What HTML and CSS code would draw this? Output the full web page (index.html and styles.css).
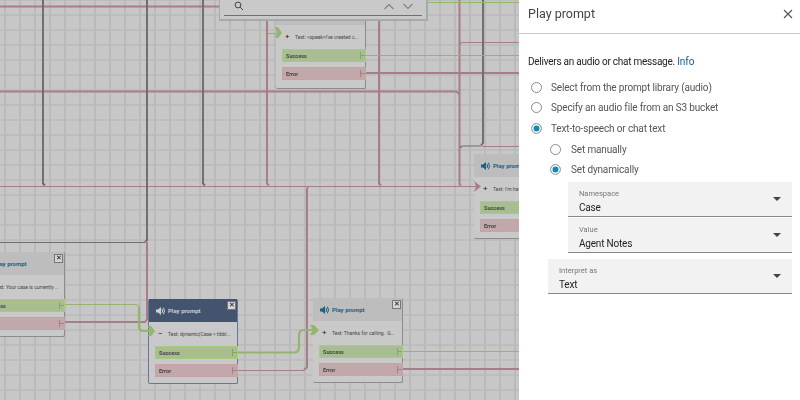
FILE: index.html
```html
<!DOCTYPE html>
<html lang="en">
<head>
<meta charset="utf-8">
<title>Play prompt</title>
<link rel="stylesheet" href="styles.css">
</head>
<body>
<div class="app">
  <main class="canvas">
    <section class="node node-one">
      <header class="node-head">
        <span class="node-icon"></span>
        <span class="node-name">Play prompt</span>
        <span class="node-close">&#10005;</span>
      </header>
      <div class="node-text"><span class="node-toggle"></span>Text: Your case is currently ...</div>
      <div class="port port-ok">Success</div>
      <div class="port port-err">Error</div>
    </section>

    <section class="node node-two">
      <header class="node-head">
        <svg class="node-icon" width="10" height="10" viewBox="0 0 10 10"><path class="speaker" d="M0 3.500H2L5 1V9L2 6.500H0Z"/><path class="speaker-wave" d="M6 3Q7.300 5 6 7M7.400 1.700Q9.600 5 7.400 8.300"/></svg>
        <span class="node-name">Play prompt</span>
        <span class="node-close">&#10005;</span>
      </header>
      <div class="node-text"><span class="node-toggle">&minus;</span>Text: dynamic(Case &gt; tibbl...</div>
      <div class="port port-ok">Success</div>
      <div class="port port-err">Error</div>
    </section>

    <section class="node node-three">
      <header class="node-head">
        <svg class="node-icon" width="10" height="10" viewBox="0 0 10 10"><path class="speaker" d="M0 3.500H2L5 1V9L2 6.500H0Z"/><path class="speaker-wave" d="M6 3Q7.300 5 6 7M7.400 1.700Q9.600 5 7.400 8.300"/></svg>
        <span class="node-name">Play prompt</span>
        <span class="node-close">&#10005;</span>
      </header>
      <div class="node-text"><span class="node-toggle">+</span>Text: Thanks for calling.&nbsp; G...</div>
      <div class="port port-ok">Success</div>
      <div class="port port-err">Error</div>
    </section>

    <section class="node node-top">
      <header class="node-head"></header>
      <div class="node-text"><span class="node-toggle">+</span>Text: &lt;speak&gt;I've created c...</div>
      <div class="port port-ok">Success</div>
      <div class="port port-err">Error</div>
    </section>

    <section class="node node-four">
      <header class="node-head">
        <svg class="node-icon" width="10" height="10" viewBox="0 0 10 10"><path class="speaker" d="M0 3.500H2L5 1V9L2 6.500H0Z"/><path class="speaker-wave" d="M6 3Q7.300 5 6 7M7.400 1.700Q9.600 5 7.400 8.300"/></svg>
        <span class="node-name">Play prompt</span>
      </header>
      <div class="node-text"><span class="node-toggle">+</span>Text: I'm having trouble...</div>
      <div class="port port-ok">Success</div>
      <div class="port port-err">Error</div>
    </section>

    <svg class="wires" width="519" height="400" viewBox="0 0 519 400" fill="none">
      <g class="rose thick">
        <path d="M0 6.500H220"/>
        <path d="M0 91.500H456.500L459.500 94"/>
        <path d="M267 20V183.500L269 185.500"/>
        <path d="M379 20V183.500L381 185.500"/>
        <path d="M459.500 0V184L461 186"/>
        <path d="M147 242V319.500L145 322H65"/>
        <path d="M307 188V367L304 370"/>
        <path d="M366 73H519"/>
        <path d="M403 369H519"/>
      </g>
      <g class="rose thin">
        <path d="M0 186.500H476"/>
        <path d="M238 370.500H304"/>
        <path d="M459.500 45L461.500 42.500H519"/>
        <path d="M482 146.500H519"/>
        <path d="M307 188L309 186.500"/>
      </g>
      <g class="gray thick">
        <path d="M43 0V183.500L45 185.500"/>
        <path d="M203 0V183.500L205 185.500"/>
        <path d="M147 0V240L145 242"/>
        <path d="M483 0V143L481 145.500"/>
      </g>
      <g class="gray thin">
        <path d="M0 242.500H145"/>
        <path d="M460 148L462 146H481"/>
      </g>
      <g class="green thin">
        <path d="M425 2.500H519"/>
        <path d="M365 55.500H519"/>
        <path d="M403 351.500H519"/>
        <path d="M65 304.500H135Q139 304.500 139 308"/>
        <path d="M268 33.500H277"/>
      </g>
      <g class="green thick">
        <path d="M139 308V326Q139 331 144 331H150"/>
        <path d="M238 352.500H294Q299 352.500 299 347V335Q299 330 304 330H313"/>
      </g>
      <path class="green-fill" d="M148 326L151 326L155 331L151 336L148 336L150 331Z"/>
      <path class="green-fill" d="M310 325L314 325L319 330L314 335L310 335L313 330Z"/>
      <path class="green-fill" d="M275 27L278 27L282 33L278 38L275 38L277 33Z"/>
      <path class="rose-fill" d="M474 181L481 186.500L474 192L476 186.500Z"/>
    </svg>

    <div class="finder">
      <div class="finder-row">
        <svg class="finder-search" width="10" height="10" viewBox="0 0 10 10" fill="none"><circle cx="4" cy="4" r="2.900"/><path d="M6.200 6.200L9 9"/></svg>
        <span class="finder-input"></span>
        <svg class="finder-arrow" width="12" height="7" viewBox="0 0 12 7" fill="none"><path d="M1.500 6L6 1.500L10.500 6"/></svg>
        <svg class="finder-arrow" width="12" height="7" viewBox="0 0 12 7" fill="none"><path d="M1.500 1L6 5.500L10.500 1"/></svg>
      </div>
    </div>
  </main>

  <aside class="panel">
    <header class="panel-head">
      <h1 class="panel-title">Play prompt</h1>
      <svg class="panel-close" width="10" height="10" viewBox="0 0 10 10" fill="none"><path d="M1 1L9 9M9 1L1 9"/></svg>
    </header>
    <div class="panel-body">
      <p class="panel-desc">Delivers an audio or chat message. <a class="panel-link" href="#">Info</a></p>
      <div class="choice"><span class="radio"></span>Select from the prompt library (audio)</div>
      <div class="choice"><span class="radio"></span>Specify an audio file from an S3 bucket</div>
      <div class="choice"><span class="radio radio-on"></span>Text-to-speech or chat text</div>
      <div class="choice choice-sub"><span class="radio"></span>Set manually</div>
      <div class="choice choice-sub"><span class="radio radio-on"></span>Set dynamically</div>
      <div class="select-group">
        <div class="select">
          <div class="select-text"><span class="select-label">Namespace</span><span class="select-value">Case</span></div>
          <span class="caret"></span>
        </div>
        <div class="select">
          <div class="select-text"><span class="select-label">Value</span><span class="select-value">Agent Notes</span></div>
          <span class="caret"></span>
        </div>
      </div>
      <div class="select select-wide">
        <div class="select-text"><span class="select-label">Interpret as</span><span class="select-value">Text</span></div>
        <span class="caret"></span>
      </div>
    </div>
  </aside>
</div>
</body>
</html>
```

FILE: styles.css
```css
* { box-sizing: border-box; }

html, body {
  margin: 0;
  height: 100%;
  overflow: hidden;
}

body {
  font-family: Roboto, "Liberation Sans", sans-serif;
  background: #fff;
}

.app {
  display: flex;
  width: 800px;
  height: 400px;
}

/* Flow canvas */
.canvas {
  position: relative;
  flex: 0 0 519px;
  height: 400px;
  overflow: hidden;
  background-color: #c7c7c7;
  background-image:
    linear-gradient(to right, #bababa 2px, transparent 2px),
    linear-gradient(to bottom, #bdbdbd 2px, transparent 2px);
  background-size: 15px 15px;
  background-position: 4px 0, 0 14px;
}

.wires {
  position: absolute;
  left: 0;
  top: 0;
}

.rose { stroke: #a87d87; }
.gray { stroke: #6f6f6f; }
.green { stroke: #93b56c; }
.thick { stroke-width: 2; }
.thin { stroke-width: 1.2; }
.green.thick { stroke-width: 2.2; }
.green-fill { fill: #93b56c; }
.rose-fill { fill: #a87d87; }

/* Flow nodes */
.node {
  position: absolute;
  width: 90px;
  height: 85px;
  display: flex;
  flex-direction: column;
  background: #c9c9c9;
  border-right: 1px solid #8b8b8b;
  border-bottom: 1px solid #8b8b8b;
  border-radius: 2px;
  filter: blur(0.35px);
}

.node-one { left: -25px; top: 252px; }
.node-two { left: 148px; top: 299px; border: 1px solid #66789a; border-top: 0; }
.node-three { left: 313px; top: 298px; }
.node-top { left: 276px; top: 2px; height: 87px; }
.node-four { left: 474px; top: 154px; }

.node-head {
  display: flex;
  align-items: center;
  flex: 0 0 23px;
  padding-left: 7px;
  gap: 2px;
  background: #bdbdbd;
  position: relative;
}

.node-two .node-head { background: #44546f; }

.node-icon { flex: none; width: 10px; }
.speaker { fill: #1f5f85; }
.speaker-wave { fill: none; stroke: #1f5f85; stroke-width: 1; }
.node-two .speaker { fill: #d0d0d0; }
.node-two .speaker-wave { stroke: #d0d0d0; }

.node-name {
  font-size: 6px;
  font-weight: 700;
  color: #1f5f85;
}

.node-two .node-name { color: #c9ccd2; }

.node-close {
  position: absolute;
  right: 1px;
  top: 2px;
  width: 9px;
  height: 9px;
  display: flex;
  align-items: center;
  justify-content: center;
  font-size: 7px;
  line-height: 1;
  color: #111;
  background: #d4d4d4;
  border: 1px solid #777;
}

.node-text {
  flex: 0 0 24px;
  display: flex;
  align-items: center;
  padding-left: 9px;
  font-size: 5px;
  color: #444;
  white-space: nowrap;
  overflow: hidden;
}

.node-toggle {
  flex: none;
  width: 10px;
  font-size: 8px;
  line-height: 1;
  color: #222;
}

.port {
  position: relative;
  flex: 0 0 13px;
  margin-left: 6px;
  margin-right: -1px;
  padding-left: 3px;
  display: flex;
  align-items: center;
  font-size: 5.500px;
  font-weight: 700;
  color: #444;
}

.port::after {
  content: "";
  position: absolute;
  right: 0;
  top: 2px;
  width: 4px;
  height: 7px;
  border-left: 1.500px solid;
  background: linear-gradient(currentColor, currentColor) center / 100% 1px no-repeat;
}

.port-ok {
  background: #a8bd90;
  border: 1px solid #a6cb7e;
}

.port-ok::after { color: #84a85c; }

.port-err {
  margin-top: 5px;
  background: #c2a8ab;
  border: 1px solid #c9a0a6;
}

.port-err::after { color: #a87d87; }

/* Search box floating over the canvas */
.finder {
  position: absolute;
  left: 219px;
  top: 0;
  width: 209px;
  height: 21px;
  padding: 0 4px;
  background: #c9c9c9;
  border-left: 1px solid #a3abad;
  border-right: 2px solid #a3abad;
  border-bottom: 2px solid #a3abad;
}

.finder-row {
  display: flex;
  align-items: center;
  height: 16px;
  padding: 0 8px 3px 10px;
  gap: 7px;
  border-bottom: 1px solid #6f6f6f;
}

.finder-search circle, .finder-search path {
  stroke: #444;
  stroke-width: 1;
}

.finder-input { flex: 1; }

.finder-arrow path {
  stroke: #808080;
  stroke-width: 1.100px;
}

/* Right panel */
.panel {
  flex: 1;
  display: flex;
  flex-direction: column;
  background: #fff;
  color: #444;
}

.panel-head {
  display: flex;
  align-items: center;
  justify-content: space-between;
  height: 34px;
  padding: 0 7px 6px 9px;
  border-bottom: 1px solid #ccc;
}

.panel-title {
  margin: 0;
  font-size: 12.500px;
  font-weight: 400;
  color: #444;
  filter: blur(0.3px);
}

.panel-close path {
  stroke: #555;
  stroke-width: 1.100px;
}

.panel-body {
  display: flex;
  flex-direction: column;
  padding: 21px 8px 0 9px;
  filter: blur(0.3px);
}

.panel-desc {
  margin: 0 0 8px;
  height: 14px;
  line-height: 14px;
  font-size: 10px;
  letter-spacing: -0.250px;
  color: #222;
}

.panel-link {
  color: #0b5cab;
  letter-spacing: 0;
  text-decoration: none;
}

.choice {
  display: flex;
  align-items: center;
  height: 20.600px;
  font-size: 10px;
  letter-spacing: -0.150px;
  color: #555;
  gap: 9px;
  padding-left: 3px;
}

.choice-sub {
  padding-left: 22px;
  gap: 10px;
}

.radio {
  flex: none;
  width: 11px;
  height: 11px;
  border: 1px solid #8a8a8a;
  border-radius: 50%;
  background: #fff;
}

.radio-on {
  background: #0f8caf;
  box-shadow: inset 0 0 0 1.500px #fff;
  border-color: #aaa;
}

.select-group {
  display: flex;
  flex-direction: column;
  gap: 1px;
  margin-top: 2px;
  margin-left: 40px;
}

.select {
  display: flex;
  align-items: center;
  justify-content: space-between;
  height: 35px;
  padding: 0 11px;
  background: #f2f2f2;
  border-bottom: 1px solid #888;
}

.select-wide {
  margin-top: 6px;
  margin-left: 20px;
}

.select-text {
  display: flex;
  flex-direction: column;
  gap: 2px;
  padding-top: 5px;
}

.select-label {
  font-size: 7.500px;
  line-height: 10px;
  color: #777;
}

.select-value {
  font-size: 10px;
  letter-spacing: -0.200px;
  line-height: 13px;
  color: #222;
}

.caret {
  width: 0;
  height: 0;
  border-left: 4px solid transparent;
  border-right: 4px solid transparent;
  border-top: 4px solid #444;
}
```
